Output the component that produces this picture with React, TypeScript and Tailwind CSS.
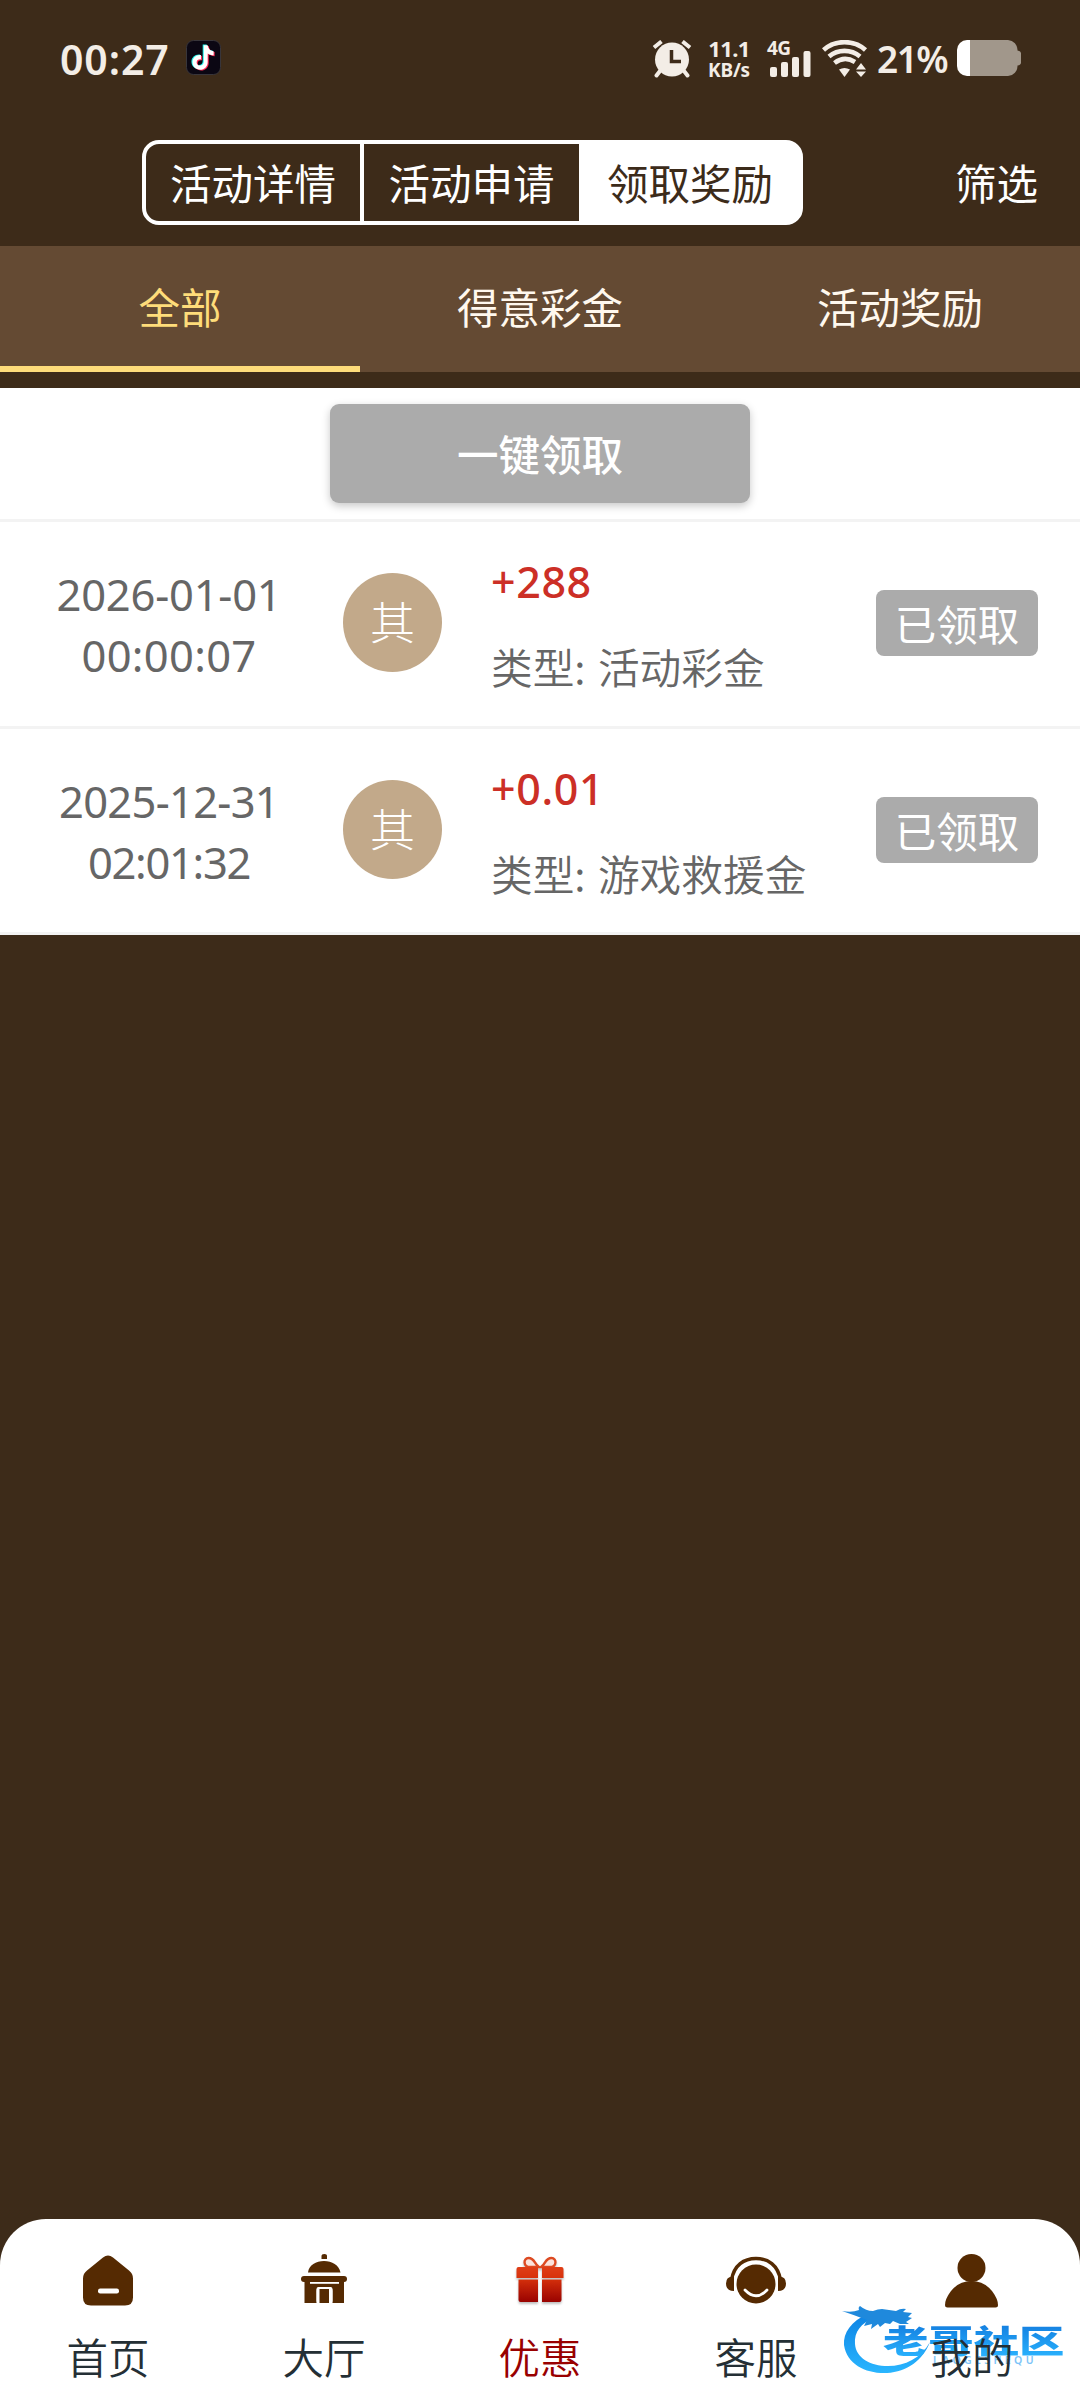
import React from "react";

const CJK = "font-['Noto_Sans_CJK_SC',sans-serif]";
const LATIN = "font-['Noto_Sans','Noto_Sans_CJK_SC',sans-serif]";

function TikTok() {
  const d = "M14 4h3.4c.3 3 2.2 4.9 5.1 5.2v3.6c-2 0-3.700-.6-5.100-1.600v7.300c0 4.200-3 6.700-6.500 6.700-3.700 0-6.600-2.800-6.600-6.400 0-3.900 3.300-6.700 7.300-6.200v3.700c-2-.4-3.700.8-3.700 2.600 0 1.600 1.300 2.700 2.900 2.700 1.900 0 3.200-1.200 3.200-3.500z";
  return (
    <svg className="h-[35px] w-[35px]" viewBox="0 0 35 35">
      <rect x="0.500" y="0.500" width="34" height="34" rx="7" fill="#0b0713" stroke="#38353a" />
      <g transform="translate(1.500 .500) scale(1.160)">
        <path d={d} transform="translate(-.9 -.5)" fill="#25f4ee" />
        <path d={d} transform="translate(.9 .7)" fill="#fe2c55" />
        <path d={d} fill="#fff" />
      </g>
    </svg>
  );
}

function StatusBar() {
  return (
    <div className={`flex h-[117px] pt-[40px] text-[#f3ede6] ${LATIN}`}>
      <div className="ml-[60px] w-[120px] text-[41px] font-semibold leading-[38px] tracking-[0.900px]">00:27</div>
      <div className="ml-[6px]">
        <TikTok />
      </div>
      <svg className="ml-[431px] h-[38px] w-[40px]" viewBox="0 0 40 38" fill="#f3ede6">
        <circle cx="20" cy="19.500" r="17" />
        <path d="M8 31 4.500 35.500M32 31l3.500 4.500" stroke="#f3ede6" strokeWidth="4" strokeLinecap="round" />
        <path d="M2 7.500 9.500 1.500M38 7.500 30.500 1.500" stroke="#f3ede6" strokeWidth="4" />
        <path d="M19.500 10v11.500H29" fill="none" stroke="#3d2b19" strokeWidth="3.500" />
      </svg>
      <div className="ml-[13px] w-[48px] whitespace-nowrap text-center text-[22px] font-bold leading-[21px] tracking-[-0.600px]">
        <div className="-mt-[2px]">11.1</div>
        <div className="mt-[1px] text-[19px] tracking-[-0.200px]">KB/s</div>
      </div>
      <div className="ml-[14px] w-[48px]">
        <div className="-mt-[1px] h-[15px] text-[19px] font-bold leading-[18px] tracking-[-0.500px]">4G</div>
        <svg className="-mt-[3px] h-[27px] w-[48px]" viewBox="0 0 48 27" fill="#f3ede6">
          <rect x="3" y="16" width="7" height="10" rx="2" />
          <rect x="14" y="11" width="7" height="15" rx="2" />
          <rect x="25" y="6" width="7" height="20" rx="2" />
          <rect x="36.500" y="0" width="7" height="26" rx="2" />
        </svg>
      </div>
      <svg className="ml-[7px] h-[38px] w-[46px]" viewBox="0 0 46 38" fill="none">
        <g stroke="#f3ede6" strokeWidth="4.600">
          <path d="M1.500 10C13-0.500 32-0.500 43.500 10" />
          <path d="M7 16.500C16 9 29 9 38 16.500" />
          <path d="M12.500 23C19 18 26.500 18 33 22" />
        </g>
        <path d="M17 29.500q5.500-3 11 0L22.500 37z" fill="#f3ede6" />
        <path d="m39 23 5 6.500H34zM34 31.500h10L39 37z" fill="#f3ede6" />
      </svg>
      <div className="ml-[9px] w-[72px] text-[37px] font-semibold leading-[37px] tracking-[-1.500px]">21%</div>
      <svg className="ml-[8px] h-[36px] w-[64px]" viewBox="0 0 64 36">
        <path d="M11 0h40a10 10 0 0 1 9.500 10.500q3.500.5 3.500 3v9q0 2.500-3.500 3A10 10 0 0 1 51 36H11z" fill="#a1978b" />
        <path d="M13 0h-3A10 10 0 0 0 0 10v16a10 10 0 0 0 10 10h3z" fill="#fff" />
      </svg>
    </div>
  );
}

function Header() {
  return (
    <div className="flex h-[129px] items-start pt-[23px] text-[41.500px]">
      <div className="ml-[142px] flex h-[85px] w-[661px] rounded-[17px] border-[4px] border-white leading-[77px] text-white">
        <div className="w-[214px] text-center">活动详情</div>
        <div className="w-[219px] border-l-[4px] border-white text-center">活动申请</div>
        <div className="-my-[3px] -mr-[3px] flex-1 rounded-r-[16px] bg-white pr-[1px] pt-[3px] text-center text-[#3c2b1a]">领取奖励</div>
      </div>
      <div className="ml-[152px] leading-[85px] text-white">筛选</div>
    </div>
  );
}

function Tabs() {
  return (
    <div className="mb-[16px] grid h-[126px] grid-cols-3 bg-[#644a33] text-center text-[41.500px] leading-[120px] text-[#fff8ee]">
      <div className="border-b-[6px] border-[#fedc7a] text-[#fedc7a]">全部</div>
      <div>得意彩金</div>
      <div>活动奖励</div>
    </div>
  );
}

const rows = [
  { date: "2026-01-01", time: "00:00:07", amount: "+288", type: "活动彩金", dt: "tracking-[-0.200px]", tt: "tracking-[0.300px]" },
  { date: "2025-12-31", time: "02:01:32", amount: "+0.01", type: "游戏救援金", dt: "tracking-[-0.700px]", tt: "tracking-[-1.300px]" },
];

function Row({ r }: { r: (typeof rows)[number] }) {
  return (
    <div className="flex h-[206.500px] items-start border-b-[3px] border-[#f3f3f3] bg-white">
      <div className={`ml-[29px] w-[280px] pt-[42px] text-center text-[43.500px] leading-[61px] text-[#666] ${LATIN}`}>
        <div className={r.dt}>{r.date}</div>
        <div className={r.tt}>{r.time}</div>
      </div>
      <div className="ml-[34px] mt-[51px] h-[99px] w-[99px] rounded-full bg-[#c2a98a] text-center text-[45px] font-light leading-[95px] text-white">其</div>
      <div className="ml-[49px] w-[385px]">
        <div className={`mt-[32px] h-[56px] text-[43px] font-medium leading-[56px] tracking-[0.600px] text-[#cc2f26] ${LATIN}`}>{r.amount}</div>
        <div className="mt-[26px] whitespace-pre text-[41.700px] font-[350] leading-[60px] text-[#666] [word-spacing:3px]">类型: {r.type}</div>
      </div>
      <div className="mt-[68px] h-[66px] w-[162px] rounded-[8px] bg-[#ababab] text-center text-[41.500px] leading-[66px] text-white">已领取</div>
    </div>
  );
}

const BROWN = "#552a02";

function HomeIcon() {
  return (
    <svg className="h-[56px] w-[60px]" viewBox="0 0 60 56">
      <path d="M25 3.500q5-4 10 0l16 13q4 3 4 8v19q0 8-8 8H13q-8 0-8-8v-19q0-5 4-8z" fill={BROWN} />
      <rect x="20" y="34.500" width="21" height="5" rx="2.200" fill="#fff" />
    </svg>
  );
}

function HallIcon() {
  return (
    <svg className="h-[56px] w-[60px]" viewBox="0 0 60 56" fill={BROWN}>
      <path d="M27.500 5V2q0-2 2.800-2T33 2v3zM14 18.500C15 11 22 7 30 7s15 4 16.500 11.500z" />
      <rect x="7" y="22" width="46" height="6" rx="3" />
      <path d="M10.500 27H50v22H38.500V37q0-4-4-4h-8q-4 0-4 4v12h-12z" />
      <rect x="22.500" y="33" width="16" height="16" rx="2" fill="#fff" />
      <rect x="25.500" y="35" width="9.500" height="14" />
      <rect x="16" y="28" width="29" height="1.800" fill="#fff" />
    </svg>
  );
}

function GiftIcon() {
  return (
    <svg className="h-[56px] w-[60px] drop-shadow-[0_2px_1px_rgba(0,0,0,0.250)]" viewBox="0 0 60 56">
      <defs>
        <linearGradient id="gift" x1="0" y1="3" x2="0" y2="49" gradientUnits="userSpaceOnUse">
          <stop offset="0" stopColor="#e64a22" />
          <stop offset="0.450" stopColor="#d8320c" />
          <stop offset="1" stopColor="#960000" />
        </linearGradient>
      </defs>
      <path
        d="M29 13C24 10 25 4 18.500 4 13 4 13 13 20 13zM31 13c5-3 4-9 10.500-9C47 4 47 13 40 13z"
        fill="#fbe3dc"
        stroke="#dd4a22"
        strokeWidth="2.400"
      />
      <path d="M8.500 13H28v11H6.500v-9q0-2 2-2zM32 13h19.500q2 0 2 2v9H32zM8.500 25.500H28V48H10.500q-2 0-2-2zM32 25.500h19.500V46q0 2-2 2H32z" fill="url(#gift)" />
    </svg>
  );
}

function ServiceIcon() {
  return (
    <svg className="h-[56px] w-[60px]" viewBox="0 0 60 56">
      <circle cx="30" cy="30" r="19.500" fill={BROWN} />
      <path d="M5.500 26C8 11 18 4.500 30 4.500S52 11 54.500 26" fill="none" stroke={BROWN} strokeWidth="3.500" />
      <path d="M8 22.500v14.500q-8 0-8-7.500T8 22.500zM52 22.500v14.500q8 0 8-7.500t-8-7z" fill={BROWN} />
      <path d="M19 36q11 11.500 22 0" fill="none" stroke="#fff" strokeWidth="2.800" strokeLinecap="round" />
    </svg>
  );
}

function UserIcon() {
  return (
    <svg className="h-[56px] w-[60px]" viewBox="0 0 60 56" fill={BROWN}>
      <circle cx="29.500" cy="14" r="14" />
      <path d="M3 51q0-6 6-14 8-10 20.500-10T50 37q6 8 6 14 0 2.500-2.500 2.500h-48Q3 53.500 3 51z" />
    </svg>
  );
}

function Watermark() {
  return (
    <div className="absolute left-[840px] top-[82px] h-[98px] w-[230px]">
      <svg className="absolute left-0 top-0 h-[98px] w-[100px]" viewBox="0 0 100 98">
        <defs>
          <linearGradient id="dragon" x1="0" y1="0" x2="0" y2="1">
            <stop offset="0" stopColor="#0d83e4" />
            <stop offset="1" stopColor="#2ab6ff" />
          </linearGradient>
        </defs>
        <path d="M28 13C11 20 3 32 4 44c3 20 23 29 43 28 20-1 36-13 43-31-9 16-25 24-42 24-18 0-32-8-33-22-1-12 6-21 19-26z" fill="url(#dragon)" />
        <path
          d="M2 10q10 2 17-1-1-3 1-4 6 5 13 5 5-2 9-2l14 2q5-3 10-2l-3 3 9 1-4 4 4 1-6 4 3 2-9 0-7-3-3 3-5-1-5 4-2-3-7 5 1-5-8 2 3-6Q14 14 2 10z"
          fill="#1f89dc"
        />
      </svg>
      <div className="absolute left-[43px] top-[18px] origin-left scale-x-[1.440] whitespace-nowrap bg-linear-to-b from-[#1377dc] to-[#2bb5ff] bg-clip-text text-[31.500px] font-black leading-[40px] text-transparent">
        老哥社区
      </div>
      <div className={`absolute left-[93px] top-[51px] text-[10.500px] font-semibold leading-[16px] tracking-[3.400px] text-[#7cc4f8] ${LATIN}`}>LAOGESHEQU</div>
    </div>
  );
}

const nav = [
  { label: "首页", icon: <HomeIcon /> },
  { label: "大厅", icon: <HallIcon /> },
  { label: "优惠", icon: <GiftIcon />, active: true },
  { label: "客服", icon: <ServiceIcon /> },
  { label: "我的", icon: <UserIcon /> },
];

function BottomNav() {
  return (
    <div className="relative mt-auto h-[181px] rounded-t-[46px] bg-white">
      <Watermark />
      <div className="relative grid grid-cols-5 pt-[35px]">
        {nav.map((n) => (
          <div key={n.label} className="flex flex-col items-center">
            {n.icon}
            <div className={`mt-[16px] text-[41.500px] font-[350] leading-[60px] ${n.active ? "text-[#990000]" : "text-[#242f35]"}`}>{n.label}</div>
          </div>
        ))}
      </div>
    </div>
  );
}

export default function App() {
  return (
    <div className={`flex h-[2400px] w-[1080px] flex-col overflow-hidden bg-[#3d2b19] ${CJK}`}>
      <StatusBar />
      <Header />
      <Tabs />
      <div className="h-[134px] border-b-[3px] border-[#f3f3f3] bg-white pt-[16px]">
        <div className="mx-auto h-[99px] w-[420px] rounded-[9px] bg-[#ababab] text-center text-[41.500px] font-medium leading-[98px] text-white shadow-[0_3px_8px_rgba(0,0,0,0.220)]">
          一键领取
        </div>
      </div>
      {rows.map((r) => (
        <Row key={r.date} r={r} />
      ))}
      <BottomNav />
    </div>
  );
}
